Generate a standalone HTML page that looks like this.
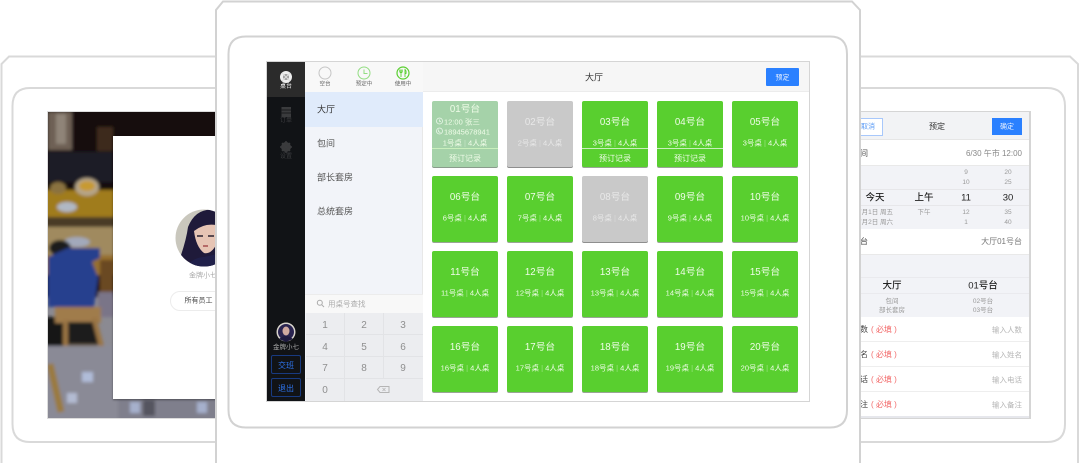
<!DOCTYPE html>
<html lang="zh"><head><meta charset="utf-8"><title>桌台</title>
<style>
*{box-sizing:border-box;margin:0;padding:0}
html,body{width:1080px;height:463px;overflow:hidden;background:#fff}
body{position:relative;font-family:"Liberation Sans","Noto Sans CJK SC",sans-serif;filter:blur(.3px)}
.a{position:absolute}
.t{position:absolute;transform:translate(-50%,-50%);white-space:nowrap;line-height:1;margin-top:1px}
.l{position:absolute;transform:translateY(-50%);white-space:nowrap;line-height:1;margin-top:1px}
.r{position:absolute;transform:translateY(-50%);white-space:nowrap;line-height:1;text-align:right;margin-top:1px}
.c{position:absolute;width:66px;height:66px;background:#59cf2f;border-radius:2px;box-shadow:0 1px 0 #9aa596;color:#effce8}
.c b{position:absolute;left:0;right:0;top:21.500px;transform:translateY(-50%);text-align:center;font-weight:400;font-size:9.700px;line-height:1;white-space:nowrap}
.c i{position:absolute;left:0;right:0;top:41.500px;transform:translateY(-50%);text-align:center;font-style:normal;font-size:7.500px;line-height:1;white-space:nowrap}
.c i em{font-style:normal;opacity:.45}
.c u{position:absolute;left:0;right:0;top:47px;height:1px;background:#c9efbd}
.c s{position:absolute;left:0;right:0;top:58px;transform:translateY(-50%);text-align:center;text-decoration:none;font-size:8px;line-height:1;white-space:nowrap}
.g{background:#c9c9c9;box-shadow:0 1px 0 #8e8e8e;color:#e8e8e8}
.k{font-size:10px;color:#8f8f8f;margin-top:2px}
.s{font-size:6.500px;color:#999}
.f{font-size:8px;color:#444}
.red{color:#f26a6a;margin-left:3px}
.ph{font-size:7.500px;color:#b5b5b5;right:58px}
.h{font-size:9.500px;color:#222;font-weight:500}
</style></head><body>

<!-- frames behind -->
<svg class="a" style="left:0;top:0" width="1080" height="463" fill="none" stroke="#d9d9d9" stroke-width="2">
<path d="M1.500 463V64L9 56.500H1070L1078 64V463"/>
<path d="M12.500 106Q12.500 88 30 88H1047Q1065 88 1065 106V424Q1065 442 1047 442H30Q12.500 442 12.500 424Z"/>
</svg>

<!-- left screen -->
<div class="a" style="left:47px;top:111px;width:170px;height:308px;border:1px solid #dcdcdc;overflow:hidden;background:#8b8a92">
<svg width="170" height="308" style="display:block"><defs><filter id="b"><feGaussianBlur stdDeviation="1.600"/></filter></defs>
<g filter="url(#b)">
<rect x="-5" y="-5" width="180" height="190" fill="#17110f"/>
<rect x="0" y="0" width="24" height="38" fill="#6e6055"/>
<rect x="8" y="2" width="10" height="30" fill="#8f8478"/>
<rect x="49" y="15" width="16" height="24" fill="#3d2c1b"/>
<rect x="0" y="40" width="65" height="30" fill="#1c1c28"/>
<rect x="-5" y="78" width="75" height="28" fill="#a07c1c"/>
<ellipse cx="39" cy="75" rx="12" ry="9" fill="#b5a58a"/>
<ellipse cx="39" cy="74" rx="8" ry="5" fill="#c79a30"/>
<ellipse cx="10" cy="76" rx="8" ry="6" fill="#8a7240"/>
<ellipse cx="19" cy="95" rx="10" ry="5" fill="#b0b8c4"/>
<rect x="-5" y="105" width="75" height="11" fill="#4a3a28"/>
<rect x="-5" y="115" width="75" height="28" fill="#a08a5e"/>
<ellipse cx="29" cy="130" rx="13" ry="5" fill="#a2a9bb"/>
<ellipse cx="12" cy="136" rx="11" ry="8" fill="#1c1a1a"/>
<rect x="-5" y="143" width="75" height="20" fill="#96702e"/>
<path d="M0 145L20 136H52L52 146L44 150L50 165L46 195H0Z" fill="#27408e"/>
<rect x="52" y="148" width="14" height="34" fill="#6a4a20"/>
<rect x="50" y="180" width="16" height="25" fill="#7a7488"/>
<rect x="-5" y="205" width="20" height="30" fill="#161616"/>
<rect x="7" y="195" width="46" height="16" fill="#a07c4c"/>
<rect x="15" y="210" width="35" height="24" fill="#1a1a1a"/>
<rect x="15" y="208" width="5" height="36" fill="#9a7444"/>
<path d="M46 206L56 244" stroke="#9a7444" stroke-width="5"/>
<rect x="20" y="232" width="30" height="6" fill="#6a5c48"/>
<rect x="-5" y="234" width="75" height="80" fill="#8a8a96"/>
<rect x="70" y="285" width="105" height="30" fill="#7f7f8c"/>
<rect x="34" y="260" width="11" height="10" fill="#b0bcd8"/>
<rect x="19" y="281" width="10" height="10" fill="#b3bbd2"/>
<rect x="82" y="290" width="10" height="11" fill="#a6b0cc"/>
<rect x="149" y="290" width="10" height="11" fill="#a6b0cc"/>
<rect x="95" y="288" width="12" height="16" fill="#55555e"/>
<path d="M2 252L13 300" stroke="#9a7a40" stroke-width="7"/>
</g></svg>
</div>
<!-- login card -->
<div class="a" style="left:113px;top:136px;width:130px;height:263px;background:#fff;box-shadow:0 1px 2px rgba(0,0,0,.4)"></div>
<svg class="a" style="left:174px;top:209px" width="60" height="60"><defs><clipPath id="ca"><circle cx="30" cy="29" r="28.500"/></clipPath></defs>
<g clip-path="url(#ca)"><rect width="60" height="60" fill="#c9c7bd"/><path d="M2 60Q12 34 14 18Q22-2 42 1L60 6V60Z" fill="#1f1a3a"/><path d="M20 22Q30 14 42 16L44 32Q38 46 30 44Q22 38 20 22Z" fill="#e6c4b4"/><path d="M23 27H29M34 27H40" stroke="#2a2230" stroke-width="1.500"/><path d="M29 37H34" stroke="#b56a68" stroke-width="2"/><path d="M8 60Q20 48 30 48L48 44L60 60Z" fill="#20204a"/></g></svg>
<div class="t" style="left:203px;top:275px;font-size:7px;color:#aaa">金牌小七</div>
<div class="a" style="left:170px;top:291px;width:70px;height:20px;border:1px solid #ececec;border-radius:10px"></div>
<div class="t" style="left:198.500px;top:300px;font-size:7px;color:#444">所有员工</div>

<!-- right screen -->
<div class="a" style="left:850px;top:111px;width:181px;height:308px;background:#fff;border:1px solid #d5d5d5;border-width:1px 2px 2px 0"></div>
<div class="a" style="left:850px;top:112px;width:179px;height:28px;background:#f2f3f5;border-bottom:1px solid #e6e6e6"></div>
<div class="a" style="left:850px;top:118px;width:33px;height:18px;background:#fff;border:1px solid #a8c8fb"></div>
<div class="t" style="left:868px;top:126px;font-size:7px;color:#5b9bf5">取消</div>
<div class="t" style="left:937px;top:126px;font-size:8px;color:#333">预定</div>
<div class="a" style="left:992px;top:118px;width:30px;height:17px;background:#2a80ff"></div>
<div class="t" style="left:1007px;top:126px;font-size:7px;color:#e8f0ff">确定</div>
<div class="l" style="left:852px;top:153px;font-size:8px;color:#555">时间</div>
<div class="r" style="right:58px;top:153px;font-size:8px;color:#888">6/30 午市 12:00</div>
<div class="a" style="left:850px;top:165px;width:179px;height:64px;background:#f2f3f7;border-top:1px solid #e9e9e9"></div>
<div class="a" style="left:850px;top:189px;width:179px;height:17px;border-top:1px solid #e7e7ea;border-bottom:1px solid #e7e7ea"></div>
<div class="t s" style="left:966px;top:172px">9</div><div class="t s" style="left:1008px;top:172px">20</div>
<div class="t s" style="left:966px;top:182px">10</div><div class="t s" style="left:1008px;top:182px">25</div>
<div class="t h" style="left:875px;top:197px">今天</div>
<div class="t h" style="left:924px;top:197px">上午</div>
<div class="t h" style="left:966px;top:197px">11</div>
<div class="t h" style="left:1008px;top:197px">30</div>
<div class="l s" style="left:858px;top:212px">7月1日 周五</div><div class="l s" style="left:858px;top:222px">7月2日 周六</div>
<div class="t s" style="left:924px;top:212px">下午</div>
<div class="t s" style="left:966px;top:212px">12</div><div class="t s" style="left:1008px;top:212px">35</div>
<div class="t s" style="left:966px;top:222px">1</div><div class="t s" style="left:1008px;top:222px">40</div>
<div class="l f" style="left:852px;top:241px">桌台</div>
<div class="r" style="right:58px;top:241px;font-size:8px;color:#777">大厅01号台</div>
<div class="a" style="left:850px;top:254px;width:179px;height:63px;background:#f2f3f7;border-top:1px solid #e9e9e9"></div>
<div class="a" style="left:850px;top:277px;width:179px;height:17px;border-top:1px solid #eaeaee;border-bottom:1px solid #eaeaee"></div>
<div class="t h" style="left:892px;top:285px">大厅</div>
<div class="t h" style="left:983px;top:285px">01号台</div>
<div class="t s" style="left:892px;top:301px">包间</div><div class="t s" style="left:983px;top:301px">02号台</div>
<div class="t s" style="left:892px;top:310px">部长套房</div><div class="t s" style="left:983px;top:310px">03号台</div>
<div class="a" style="left:850px;top:341px;width:179px;height:1px;background:#eee"></div>
<div class="a" style="left:850px;top:366px;width:179px;height:1px;background:#eee"></div>
<div class="a" style="left:850px;top:391px;width:179px;height:1px;background:#eee"></div>
<div class="a" style="left:850px;top:416px;width:179px;height:2px;background:#e6e7ec"></div>
<div class="l f" style="left:852px;top:329px">人数<span class="red">( 必填 )</span></div>
<div class="l f" style="left:852px;top:354px">姓名<span class="red">( 必填 )</span></div>
<div class="l f" style="left:852px;top:379px">电话<span class="red">( 必填 )</span></div>
<div class="l f" style="left:852px;top:404px">备注<span class="red">( 必填 )</span></div>
<div class="r ph" style="top:329px">输入人数</div>
<div class="r ph" style="top:354px">输入姓名</div>
<div class="r ph" style="top:379px">输入电话</div>
<div class="r ph" style="top:404px">输入备注</div>

<!-- center tablet -->
<svg class="a" style="left:0;top:0" width="1080" height="463" fill="#fff" stroke="#d2d2d2" stroke-width="2">
<path d="M216 470V10L223 1.500H852L860 10V470Z"/>
<path d="M228.500 54Q228.500 36.500 246 36.500H830Q847 36.500 847 54V410Q847 427.500 830 427.500H246Q228.500 427.500 228.500 410Z" fill="none"/>
</svg>
<div class="a" style="left:266px;top:61px;width:544px;height:341px;border:1px solid #d5d5d5;background:#fff"></div>

<!-- sidebar -->
<div class="a" style="left:267px;top:62px;width:38px;height:339px;background:#111316"></div>
<div class="a" style="left:267px;top:62px;width:38px;height:35px;background:#2b2b2b"></div>
<svg class="a" style="left:267px;top:62px" width="38" height="105">
<circle cx="19" cy="15" r="6" fill="#eee"/><circle cx="19" cy="15" r="3" fill="#999"/><path d="M15 11L23 19M23 11L15 19" stroke="#ddd" stroke-width="1"/>
<rect x="14.500" y="45" width="9.500" height="10" fill="#3a3b3d"/><path d="M14 48H24M14 51H24" stroke="#1a1b1d" stroke-width="1"/>
<circle cx="19" cy="85" r="3.500" fill="none" stroke="#3a3b3d" stroke-width="3"/><path d="M19 79V91M13 85H25M15 81L23 89M23 81L15 89" stroke="#3a3b3d" stroke-width="1.500"/>
</svg>
<div class="t" style="left:286px;top:86px;font-size:6px;color:#eee">桌台</div>
<div class="t" style="left:286px;top:120px;font-size:6px;color:#3d3e40">订单</div>
<div class="t" style="left:286px;top:156px;font-size:6px;color:#3d3e40">设置</div>
<svg class="a" style="left:276px;top:322px" width="20" height="20"><circle cx="10" cy="10" r="9.500" fill="#d8d4cc"/><circle cx="10" cy="10" r="8" fill="#2a2450"/><ellipse cx="10" cy="9" rx="3.500" ry="4.500" fill="#cfa9a0"/><path d="M3 17Q10 11 17 17L10 20Z" fill="#1e1a40"/></svg>
<div class="t" style="left:286px;top:346.500px;font-size:6.500px;color:#a8a8a8">金牌小七</div>
<div class="a" style="left:271px;top:355px;width:30px;height:19px;border:1px solid #183a80;border-radius:2px"></div>
<div class="t" style="left:286px;top:364.500px;font-size:8px;color:#2d72e8">交班</div>
<div class="a" style="left:271px;top:378px;width:30px;height:19px;border:1px solid #183a80;border-radius:2px"></div>
<div class="t" style="left:286px;top:387.500px;font-size:8px;color:#2d72e8">退出</div>

<!-- category panel -->
<div class="a" style="left:305px;top:62px;width:118px;height:339px;background:#f2f4f9;border-right:1px solid #e8e8e8"></div>
<div class="a" style="left:305px;top:62px;width:118px;height:30px;background:#f8f8f8"></div>
<svg class="a" style="left:305px;top:62px" width="118" height="30" fill="none">
<circle cx="20" cy="11" r="6" stroke="#c5c5c5"/>
<circle cx="59" cy="11" r="6" stroke="#92dd82"/><path d="M59 7.500V11.500H62.500" stroke="#92dd82"/>
<circle cx="98" cy="11" r="6" stroke="#59cf2f" stroke-width="1.200"/><path d="M96 7.500V15M94.800 7.500V10Q96 11.500 97.200 10V7.500M100 15V7.500Q101.500 8.500 101 11.500H100" stroke="#59cf2f" stroke-width=".9"/>
</svg>
<div class="t" style="left:325px;top:83.500px;font-size:5.500px;color:#666">空台</div>
<div class="t" style="left:364px;top:83.500px;font-size:5.500px;color:#666">预定中</div>
<div class="t" style="left:403px;top:83.500px;font-size:5.500px;color:#666">使用中</div>
<div class="a" style="left:305px;top:92px;width:118px;height:35px;background:#e0ebfb"></div>
<div class="l" style="left:317px;top:109px;font-size:9px;color:#333">大厅</div>
<div class="l" style="left:317px;top:143px;font-size:9px;color:#555">包间</div>
<div class="l" style="left:317px;top:177px;font-size:9px;color:#555">部长套房</div>
<div class="l" style="left:317px;top:211px;font-size:9px;color:#555">总统套房</div>
<div class="a" style="left:305px;top:294px;width:118px;height:19px;background:#f8f8f8;border-top:1px solid #ececec"></div>
<svg class="a" style="left:316px;top:299px" width="9" height="9" fill="none" stroke="#aaa"><circle cx="3.800" cy="3.800" r="2.500"/><path d="M5.800 5.800L8 8"/></svg>
<div class="l" style="left:328px;top:303px;font-size:7.500px;color:#aaa">用桌号查找</div>
<div class="a" style="left:306px;top:313px;width:117px;height:88px;background:#ecedf0"></div>
<svg class="a" style="left:306px;top:313px" width="117" height="88" stroke="#e2e3e6" fill="none"><path d="M38.500 0V88M77.500 0V66M0 21.500H117M0 43.500H117M0 65.500H117"/><path d="M74 73.500H83V79.500H74L71.500 76.500Z" stroke="#b5b5b5"/><path d="M76.500 75L79.500 78M79.500 75L76.500 78" stroke="#b5b5b5" stroke-width=".8"/></svg>
<div class="t k" style="left:325px;top:324px">1</div><div class="t k" style="left:364px;top:324px">2</div><div class="t k" style="left:403px;top:324px">3</div>
<div class="t k" style="left:325px;top:346px">4</div><div class="t k" style="left:364px;top:346px">5</div><div class="t k" style="left:403px;top:346px">6</div>
<div class="t k" style="left:325px;top:367px">7</div><div class="t k" style="left:364px;top:367px">8</div><div class="t k" style="left:403px;top:367px">9</div>
<div class="t k" style="left:325px;top:389px">0</div>

<!-- main -->
<div class="a" style="left:423px;top:62px;width:386px;height:30px;background:#f6f6f6;border-bottom:1px solid #ececec"></div>
<div class="t" style="left:594px;top:77px;font-size:9px;color:#333">大厅</div>
<div class="a" style="left:766px;top:68px;width:33px;height:18px;background:#2a80ff;border-radius:1px"></div>
<div class="t" style="left:782.500px;top:76.500px;font-size:7px;color:#e8f0ff">预定</div>

<div class="c" style="left:432px;top:101px;background:#a5d2a9;box-shadow:0 1px 0 #8a9c8c"><b style="top:8.500px">01号台</b>
<span class="l" style="left:12px;top:20px;font-size:7.500px">12:00 张三</span><span class="l" style="left:12px;top:30px;font-size:7.500px">18945678941</span>
<svg class="a" style="left:3px;top:16px" width="9" height="19" fill="none" stroke="#eaf6ea" stroke-width=".8"><circle cx="4.500" cy="4" r="3"/><path d="M4.500 2.500V4.300H6"/><circle cx="4.500" cy="14" r="3"/><path d="M3.300 12.500Q3 15 5.500 15.500"/></svg>
<i>1号桌 <em>|</em> 4人桌</i><u></u><s>预订记录</s></div>
<div class="c g" style="left:507px;top:101px"><b>02号台</b><i>2号桌 <em>|</em> 4人桌</i></div>
<div class="c" style="left:582px;top:101px"><b>03号台</b><i>3号桌 <em>|</em> 4人桌</i><u></u><s>预订记录</s></div>
<div class="c" style="left:657px;top:101px"><b>04号台</b><i>3号桌 <em>|</em> 4人桌</i><u></u><s>预订记录</s></div>
<div class="c" style="left:732px;top:101px"><b>05号台</b><i>3号桌 <em>|</em> 4人桌</i></div>

<div class="c" style="left:432px;top:176px"><b>06号台</b><i>6号桌 <em>|</em> 4人桌</i></div>
<div class="c" style="left:507px;top:176px"><b>07号台</b><i>7号桌 <em>|</em> 4人桌</i></div>
<div class="c g" style="left:582px;top:176px"><b>08号台</b><i>8号桌 <em>|</em> 4人桌</i></div>
<div class="c" style="left:657px;top:176px"><b>09号台</b><i>9号桌 <em>|</em> 4人桌</i></div>
<div class="c" style="left:732px;top:176px"><b>10号台</b><i>10号桌 <em>|</em> 4人桌</i></div>

<div class="c" style="left:432px;top:251px"><b>11号台</b><i>11号桌 <em>|</em> 4人桌</i></div>
<div class="c" style="left:507px;top:251px"><b>12号台</b><i>12号桌 <em>|</em> 4人桌</i></div>
<div class="c" style="left:582px;top:251px"><b>13号台</b><i>13号桌 <em>|</em> 4人桌</i></div>
<div class="c" style="left:657px;top:251px"><b>14号台</b><i>14号桌 <em>|</em> 4人桌</i></div>
<div class="c" style="left:732px;top:251px"><b>15号台</b><i>15号桌 <em>|</em> 4人桌</i></div>

<div class="c" style="left:432px;top:326px"><b>16号台</b><i>16号桌 <em>|</em> 4人桌</i></div>
<div class="c" style="left:507px;top:326px"><b>17号台</b><i>17号桌 <em>|</em> 4人桌</i></div>
<div class="c" style="left:582px;top:326px"><b>18号台</b><i>18号桌 <em>|</em> 4人桌</i></div>
<div class="c" style="left:657px;top:326px"><b>19号台</b><i>19号桌 <em>|</em> 4人桌</i></div>
<div class="c" style="left:732px;top:326px"><b>20号台</b><i>20号桌 <em>|</em> 4人桌</i></div>
</body></html>
